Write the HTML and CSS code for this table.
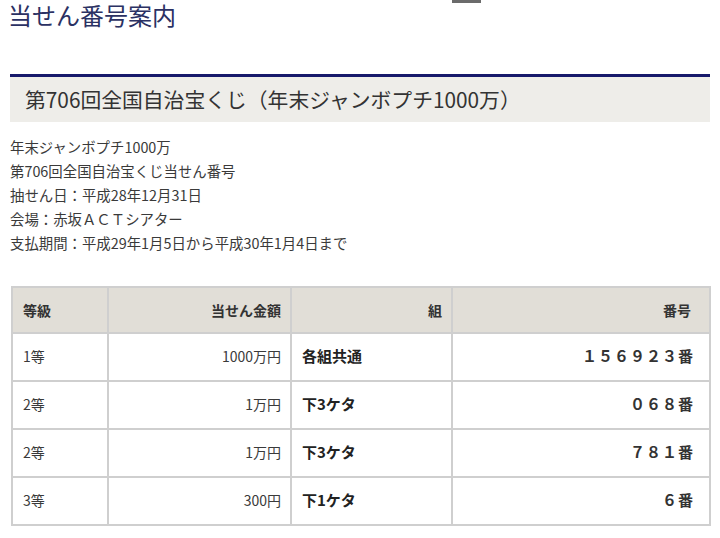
FILE: index.html
```html
<!DOCTYPE html>
<html lang="ja">
<head>
<meta charset="utf-8">
<title>当せん番号案内</title>
<link rel="stylesheet" href="styles.css">
</head>
<body>
<div class="page">
  <div class="top-tab"></div>
  <h1 class="title">当せん番号案内</h1>
  <h2 class="heading">第706回全国自治宝くじ（年末ジャンボプチ1000万）</h2>
  <div class="info">
    <p>年末ジャンボプチ1000万</p>
    <p>第706回全国自治宝くじ当せん番号</p>
    <p>抽せん日：平成28年12月31日</p>
    <p>会場：赤坂ＡＣＴシアター</p>
    <p>支払期間：平成29年1月5日から平成30年1月4日まで</p>
  </div>
  <table class="results">
    <colgroup>
      <col class="c-grade">
      <col class="c-amount">
      <col class="c-group">
      <col class="c-number">
    </colgroup>
    <thead>
      <tr>
        <th class="left">等級</th>
        <th class="right">当せん金額</th>
        <th class="right">組</th>
        <th class="right num-h">番号</th>
      </tr>
    </thead>
    <tbody>
      <tr>
        <td>1等</td>
        <td class="right">1000万円</td>
        <td class="group">各組共通</td>
        <td class="num">１５６９２３番</td>
      </tr>
      <tr>
        <td>2等</td>
        <td class="right">1万円</td>
        <td class="group">下3ケタ</td>
        <td class="num">０６８番</td>
      </tr>
      <tr>
        <td>2等</td>
        <td class="right">1万円</td>
        <td class="group">下3ケタ</td>
        <td class="num">７８１番</td>
      </tr>
      <tr>
        <td>3等</td>
        <td class="right">300円</td>
        <td class="group">下1ケタ</td>
        <td class="num">６番</td>
      </tr>
    </tbody>
  </table>
</div>
</body>
</html>
```

FILE: styles.css
```css
* { box-sizing: border-box; }
html, body {
  margin: 0;
  padding: 0;
  background: #ffffff;
}
body {
  font-family: "Noto Sans CJK JP", "Noto Sans", sans-serif;
  color: #3a3a3a;
}
.page {
  position: relative;
  padding: 0 10px 0 10px;
}
.top-tab {
  position: absolute;
  top: 0;
  left: 452px;
  width: 29px;
  height: 3px;
  background: #6b6b6b;
}
.title {
  margin: 0 0 44px -2px;
  font-size: 24px;
  font-weight: normal;
  line-height: 30px;
  color: #2b3163;
}
.heading {
  margin: 0;
  border-top: 3px solid #17196b;
  background: #eeede9;
  height: 48px;
  padding: 0 0 0 15px;
  font-size: 20.8px;
  font-weight: normal;
  line-height: 44px;
  color: #333333;
}
.info {
  margin-top: 13px;
  font-size: 14.4px;
  line-height: 24px;
  color: #3a3a3a;
}
.info p {
  margin: 0;
}
.results {
  margin-top: 31px;
  margin-left: 1px;
  width: 698px;
  border-collapse: collapse;
  table-layout: fixed;
  font-size: 14px;
  color: #3a3a3a;
}
.c-grade { width: 96px; }
.c-amount { width: 183px; }
.c-group { width: 161px; }
.c-number { width: 258px; }
.results th,
.results td {
  border: 2px solid #cfcfcf;
  padding: 0 9px 0 10px;
  vertical-align: middle;
}
.results thead tr { height: 46px; }
.results tbody tr { height: 48px; }
.results th {
  background: #e1ded7;
  font-weight: bold;
  color: #333333;
}
.results th.left { text-align: left; }
.results .right { text-align: right; }
.results td { line-height: 20px; padding-bottom: 2px; }
.results td.group {
  font-weight: bold;
  color: #222222;
  font-size: 15px;
}
.results td.num {
  text-align: right;
  font-weight: bold;
  font-size: 15px;
  color: #333333;
  padding-right: 15px;
  letter-spacing: 1px;
}
.results th.num-h { padding-right: 18px; }
```
